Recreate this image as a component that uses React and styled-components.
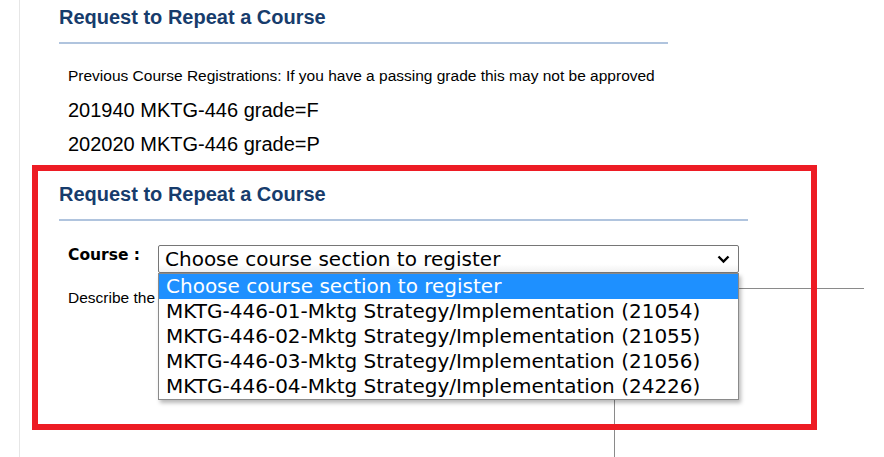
import React from 'react';
import styled, { createGlobalStyle } from 'styled-components';

const GlobalStyle = createGlobalStyle`
  html, body {
    margin: 0;
    background: #fff;
  }
  body {
    font-family: "Liberation Sans", Arial, sans-serif;
    color: #000;
  }
`;

const Page = styled.div`
  position: relative;
  height: 457px;
  overflow: hidden;
  margin-left: 19px;
  border-left: 1px solid #e6e6e6;
`;

const Section = styled.section`
  padding-left: 39px;
`;

const Heading = styled.h2`
  margin: 0;
  padding-top: 6px;
  font-size: 20px;
  line-height: 22px;
  font-weight: bold;
  color: #173c6c;
`;

const Rule = styled.div`
  width: ${(p) => p.width}px;
  margin-top: 14px;
  border-top: 2px solid #b0c4de;
`;

const Notes = styled.div`
  display: flex;
  flex-direction: column;
  gap: 14px;
  padding: 22px 0 0 9px;
`;

const Note = styled.div`
  font-size: ${(p) => (p.small ? 15.5 : 20)}px;
  line-height: 20px;
`;

/* annotation frame drawn over the content */
const Highlight = styled.div`
  position: relative;
  width: 785px;
  height: 265px;
  box-sizing: border-box;
  margin: 11px 0 0 12px;
  padding: 12px 0 0 27px;

  &::after {
    content: '';
    position: absolute;
    inset: 0;
    border: 6px solid #ed1c24;
    pointer-events: none;
    z-index: 3;
  }
`;

const FieldRow = styled.div`
  display: flex;
  align-items: flex-start;
  margin-top: 24px;
  padding-left: 9px;
`;

const Label = styled.div`
  width: 90px;
  font-family: "DejaVu Sans", Verdana, sans-serif;
  font-size: 15.5px;
  font-weight: bold;
  line-height: 20px;
`;

const SelectWrap = styled.div`
  position: relative;
  width: 581px;
`;

const SelectBox = styled.div`
  display: flex;
  align-items: center;
  justify-content: space-between;
  height: 28px;
  box-sizing: border-box;
  padding: 0 8px 0 6px;
  border: 1px solid #767676;
  border-radius: 2px;
  background: linear-gradient(#fff 70%, #f1f1f1);
  font-family: "DejaVu Sans", Verdana, sans-serif;
  font-size: 20px;
`;

const OptionList = styled.ul`
  position: absolute;
  top: 100%;
  left: 0;
  right: 0;
  z-index: 2;
  margin: 0;
  padding: 0;
  list-style: none;
  background: #fff;
  border: 1px solid #8a8a8a;
  box-shadow: 2px 3px 4px rgba(0, 0, 0, 0.28);
`;

const Option = styled.li`
  height: 25px;
  padding-left: 7px;
  font-family: "DejaVu Sans", Verdana, sans-serif;
  font-size: 20px;
  line-height: 25px;
  white-space: nowrap;
  background: ${(p) => (p.selected ? '#1e90ff' : 'transparent')};
  color: ${(p) => (p.selected ? '#fff' : '#000')};
`;

const Describe = styled.div`
  margin-top: 15px;
  padding-left: 9px;
  font-size: 15.5px;
  line-height: 20px;
`;

const Line = styled.div`
  position: absolute;
  z-index: 1;
  background: #8a8a8a;
  left: ${(p) => p.x}px;
  top: ${(p) => p.y}px;
  width: ${(p) => p.w}px;
  height: ${(p) => p.h}px;
`;

const Chevron = () => (
  <svg width="13" height="9" viewBox="0 0 13 9">
    <path d="M1.5 1.5 L6.5 6.5 L11.5 1.5" fill="none" stroke="#000" strokeWidth="2.4" />
  </svg>
);

const sections = [
  'MKTG-446-01-Mktg Strategy/Implementation (21054)',
  'MKTG-446-02-Mktg Strategy/Implementation (21055)',
  'MKTG-446-03-Mktg Strategy/Implementation (21056)',
  'MKTG-446-04-Mktg Strategy/Implementation (24226)',
];

export default function App() {
  return (
    <>
      <GlobalStyle />
      <Page>
        <Line x={580} y={288} w={264} h={1} />
        <Line x={594} y={380} w={1} h={80} />

        <Section>
          <Heading>Request to Repeat a Course</Heading>
          <Rule width={609} />
          <Notes>
            <Note small>Previous Course Registrations: If you have a passing grade this may not be approved</Note>
            <Note>201940 MKTG-446 grade=F</Note>
            <Note>202020 MKTG-446 grade=P</Note>
          </Notes>
        </Section>

        <Highlight>
          <Heading>Request to Repeat a Course</Heading>
          <Rule width={689} />
          <FieldRow>
            <Label>Course :</Label>
            <SelectWrap>
              <SelectBox>
                <span>Choose course section to register</span>
                <Chevron />
              </SelectBox>
              <OptionList>
                <Option selected>Choose course section to register</Option>
                {sections.map((s) => (
                  <Option key={s}>{s}</Option>
                ))}
              </OptionList>
            </SelectWrap>
          </FieldRow>
          <Describe>Describe the</Describe>
        </Highlight>
      </Page>
    </>
  );
}
